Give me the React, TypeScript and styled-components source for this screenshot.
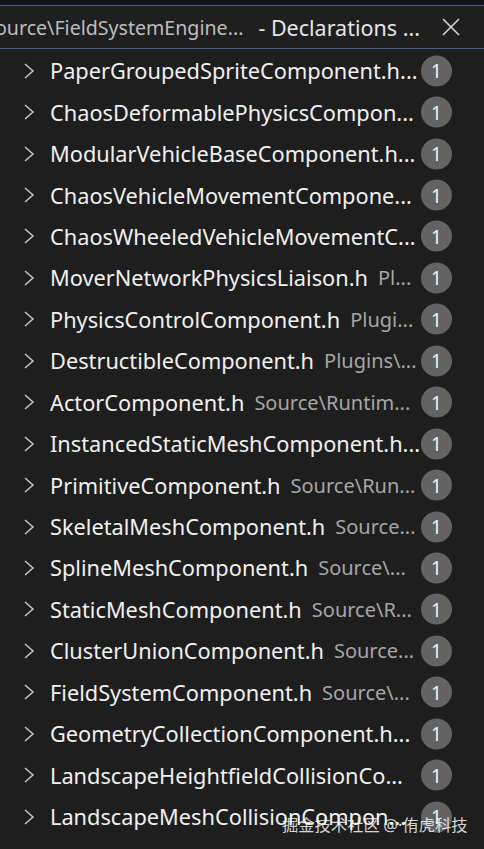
import React from "react";
import styled, { createGlobalStyle } from "styled-components";

const Global = createGlobalStyle`
  html, body { margin: 0; padding: 0; background: #1e1e1e; }
  body { width: 484px; height: 849px; overflow: hidden; font-family: "Noto Sans", "Open Sans", sans-serif; }
`;

const Page = styled.div`
  position: relative;
  width: 484px;
  height: 849px;
  background: #1e1e1e;
  overflow: hidden;
`;

const TopStrip = styled.div`
  height: 5px;
  background: #141414;
`;

const Header = styled.div`
  height: 42px;
  display: flex;
  align-items: center;
  background: #1f1f1f;
  border-top: 1px solid #3f5f8f;
  border-bottom: 1px solid #3f5f8f;
  white-space: nowrap;
  overflow: hidden;
`;

const HeaderPath = styled.span`
  margin-left: -5px;
  font-size: 19.6px;
  color: #bdbdbd;
`;

const HeaderTitle = styled.span`
  margin-left: 15px;
  font-size: 21.5px;
  color: #e6e6e6;
`;

const CloseBtn = styled.div`
  margin-left: auto;
  margin-right: 23px;
  width: 20px;
  height: 20px;
  display: flex;
  align-items: center;
  justify-content: center;
`;

const List = styled.div`
  display: flex;
  flex-direction: column;
  padding-top: 1px;
`;

const Row = styled.div`
  height: 41.45px;
  display: flex;
  align-items: center;
  white-space: nowrap;
  position: relative;
`;

const Chevron = styled.div`
  width: 14px;
  height: 18px;
  margin-left: 22px;
  margin-right: 14px;
  display: flex;
  align-items: center;
`;

const Name = styled.span`
  font-size: 21.75px;
  color: #f0f0f0;
`;

const Path = styled.span`
  margin-left: 10px;
  font-size: 20px;
  color: #a6a6a6;
`;

const Badge = styled.div`
  position: absolute;
  left: 421px;
  top: 50%;
  transform: translateY(-50%);
  width: 31px;
  height: 31px;
  border-radius: 50%;
  background: #636363;
  color: #f2f2f2;
  font-size: 19px;
  display: flex;
  align-items: center;
  justify-content: center;
`;

const Watermark = styled.div`
  position: absolute;
  left: 282px;
  top: 812px;
  font-family: "Noto Sans CJK SC", "Noto Sans", sans-serif;
  font-size: 16.3px;
  color: rgba(255, 255, 255, 0.82);
  white-space: nowrap;
`;

const Latin = styled.span`
  font-family: "Noto Sans", sans-serif;
`;

const items: { name: string; path?: string }[] = [
  { name: "PaperGroupedSpriteComponent.h..." },
  { name: "ChaosDeformablePhysicsCompon..." },
  { name: "ModularVehicleBaseComponent.h..." },
  { name: "ChaosVehicleMovementCompone..." },
  { name: "ChaosWheeledVehicleMovementC..." },
  { name: "MoverNetworkPhysicsLiaison.h", path: "Pl..." },
  { name: "PhysicsControlComponent.h", path: "Plugi..." },
  { name: "DestructibleComponent.h", path: "Plugins\\..." },
  { name: "ActorComponent.h", path: "Source\\Runtim..." },
  { name: "InstancedStaticMeshComponent.h..." },
  { name: "PrimitiveComponent.h", path: "Source\\Run..." },
  { name: "SkeletalMeshComponent.h", path: "Source..." },
  { name: "SplineMeshComponent.h", path: "Source\\..." },
  { name: "StaticMeshComponent.h", path: "Source\\R..." },
  { name: "ClusterUnionComponent.h", path: "Source..." },
  { name: "FieldSystemComponent.h", path: "Source\\..." },
  { name: "GeometryCollectionComponent.h..." },
  { name: "LandscapeHeightfieldCollisionCo..." },
  { name: "LandscapeMeshCollisionCompon..." },
];

const ChevronIcon = () => (
  <svg width="14" height="18" viewBox="0 0 14 18">
    <path d="M3 2 L11 9 L3 16" fill="none" stroke="#c8c8c8" strokeWidth="1.5" />
  </svg>
);

const CloseIcon = () => (
  <svg width="18" height="18" viewBox="0 0 18 18">
    <path d="M1 1 L17 17 M17 1 L1 17" stroke="#d8d8d8" strokeWidth="1.6" />
  </svg>
);

export default function App() {
  return (
    <Page>
      <Global />
      <TopStrip />
      <Header>
        <HeaderPath>ource\FieldSystemEngine...</HeaderPath>
        <HeaderTitle>- Declarations ...</HeaderTitle>
        <CloseBtn>
          <CloseIcon />
        </CloseBtn>
      </Header>
      <List>
        {items.map((it, i) => (
          <Row key={i}>
            <Chevron>
              <ChevronIcon />
            </Chevron>
            <Name>{it.name}</Name>
            {it.path && <Path>{it.path}</Path>}
            <Badge>1</Badge>
          </Row>
        ))}
      </List>
      <Watermark>
        掘金技术社区 <Latin>@·</Latin>侑虎科技
      </Watermark>
    </Page>
  );
}
